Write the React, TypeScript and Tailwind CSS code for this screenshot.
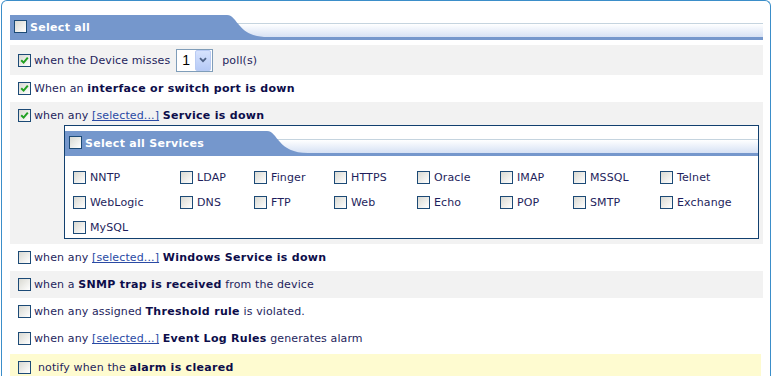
import React from "react";

const Box = ({ checked, className = "" }: { checked?: boolean; className?: string }) => (
  <span
    className={
      "inline-flex h-[13px] w-[13px] shrink-0 items-center justify-center border border-[#1c4a76] bg-linear-to-br from-[#d9d9d2] to-white " +
      className
    }
  >
    {checked && (
      <svg width="9" height="9" viewBox="0 0 9 9">
        <path d="M1.2 4.2 L3.6 6.6 L7.8 1.6" stroke="#21a121" strokeWidth="2" fill="none" />
      </svg>
    )}
  </span>
);

const TabHeader = ({ tabClass, label, id }: { tabClass: string; label: string; id: string }) => (
  <div className="flex h-[25px]">
    <div className={"flex items-center gap-[3px] bg-[#7597cc] pl-[4px] " + tabClass}>
      <Box className="-mt-[2px]" />
      <span className="pt-px font-bold tracking-[0.3px] text-white">{label}</span>
    </div>
    <svg width="45" height="25" viewBox="0 0 45 25" className="block shrink-0">
      <defs>
        <linearGradient id={id} x1="0" y1="0" x2="0" y2="1">
          <stop offset="0" stopColor="#ffffff" />
          <stop offset="1" stopColor="#d6e1f4" />
        </linearGradient>
      </defs>
      <rect x="0" y="8" width="45" height="1" fill="#c5d4df" />
      <rect x="0" y="9" width="45" height="13" fill={`url(#${id})`} />
      <path d="M0 0 H4 C10 0 12 6 17 11 C22 17 30 22 45 22 V25 H0 Z" fill="#7597cc" />
    </svg>
    <div className="flex flex-1 flex-col">
      <div className="h-[8px]" />
      <div className="h-px bg-[#c5d4df]" />
      <div className="h-[13px] bg-linear-to-b from-white to-[#d6e1f4]" />
      <div className="h-[3px] bg-[#7597cc]" />
    </div>
  </div>
);

const Link = () => <span className="text-[#2a4aa4] underline">[selected...]</span>;
const B = ({ children }: { children: React.ReactNode }) => (
  <span className="font-bold tracking-[0.3px] text-[#0d0d4a]">{children}</span>
);
const T = ({ children, className = "ml-[3px]" }: { children: React.ReactNode; className?: string }) => (
  <span className={"pt-[2px] tracking-[0.12px] " + className}>{children}</span>
);

const services = [
  "NNTP", "LDAP", "Finger", "HTTPS", "Oracle", "IMAP", "MSSQL", "Telnet",
  "WebLogic", "DNS", "FTP", "Web", "Echo", "POP", "SMTP", "Exchange",
  "MySQL",
];

export default function App() {
  return (
    <div className="h-[376px] overflow-hidden bg-white font-['DejaVu_Sans',Verdana,sans-serif] text-[11px] text-[#1e1e5c]">
      <div className="ml-px h-[400px] w-[770px] rounded-t-[6px] border-x border-t border-[#3b8ec9] pl-[8px] pr-[7px] pt-[14px]">
        <TabHeader tabClass="w-[213px]" label="Select all" id="g1" />

        <div className="mt-[5px] flex h-[30px] items-center bg-[#f2f2f2] pl-[8px]">
          <Box checked />
          <T>when the Device misses</T>
          <div className="ml-[6px] flex h-[23px] w-[37px] items-center border border-[#7f9db9] bg-white">
            <span className="flex-1 pl-[5px] font-['Liberation_Sans',Arial,sans-serif] text-[14px] text-black">1</span>
            <span className="mr-px flex h-[21px] w-[16px] items-center justify-center rounded-[2px] border border-[#b9cbf3] bg-linear-to-b from-[#d6e2fd] to-[#b6caf6]">
              <svg width="8" height="6" viewBox="0 0 8 6">
                <path d="M1 1.2 L4 4.2 L7 1.2" stroke="#4d6185" strokeWidth="1.8" fill="none" />
              </svg>
            </span>
          </div>
          <T className="ml-[9px]">poll(s)</T>
        </div>

        <div className="flex h-[27px] items-center pl-[8px]">
          <Box checked />
          <T>
            When an <B>interface or switch port is down</B>
          </T>
        </div>

        <div className="flex flex-col bg-[#f2f2f2] pb-[5px]">
          <div className="flex h-[23px] items-center pl-[8px] pt-[4px]">
            <Box checked />
            <T>
              when any <Link /> <B>Service is down</B>
            </T>
          </div>
          <div className="ml-[54px] mr-[4px] h-[114px] border border-[#12406f] bg-white">
            <div className="pt-[5px]">
              <TabHeader tabClass="w-[198px]" label="Select all Services" id="g2" />
            </div>
            <div className="grid grid-cols-[107px_74px_80px_83px_83px_73px_87px_1fr] gap-y-[5px] pl-[8px] pt-[12px]">
              {services.map((s) => (
                <div key={s} className="flex h-[20px] items-center gap-[4px]">
                  <Box className="-mt-[2px]" />
                  <span className="tracking-[0.12px]">{s}</span>
                </div>
              ))}
            </div>
          </div>
        </div>

        <div className="flex h-[27px] items-center pl-[8px]">
          <Box />
          <T>
            when any <Link /> <B>Windows Service is down</B>
          </T>
        </div>
        <div className="flex h-[27px] items-center bg-[#f2f2f2] pl-[8px]">
          <Box />
          <T>
            when a <B>SNMP trap is received</B> from the device
          </T>
        </div>
        <div className="flex h-[27px] items-center pl-[8px]">
          <Box />
          <T>
            when any assigned <B>Threshold rule</B> is violated.
          </T>
        </div>
        <div className="flex h-[27px] items-center pl-[8px]">
          <Box />
          <T>
            when any <Link /> <B>Event Log Rules</B> generates alarm
          </T>
        </div>
        <div className="mr-[2px] mt-[2px] flex h-[27px] items-center bg-[#fefbd0] pl-[8px]">
          <Box />
          <T className="ml-[7px]">
            notify when the <B>alarm is cleared</B>
          </T>
        </div>
      </div>
    </div>
  );
}
